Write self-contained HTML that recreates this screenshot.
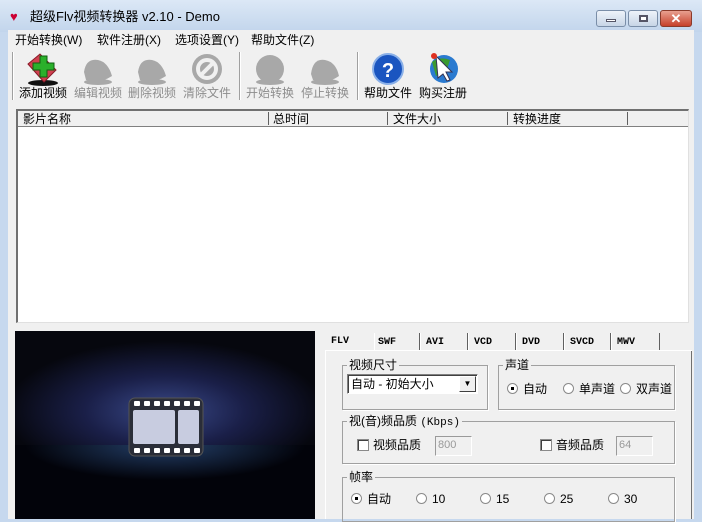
<!DOCTYPE html><html><head><meta charset="utf-8"><style>
*{margin:0;padding:0;box-sizing:border-box}
body{width:702px;height:519px;overflow:hidden;position:relative;background:#c6d8ee;font-family:"Liberation Sans","Noto Sans CJK SC",sans-serif;font-size:12px;color:#000}
.a{position:absolute}
.t{white-space:nowrap;line-height:14px}
.g{color:#8d8d8d}
.m{font-family:"Liberation Mono","Noto Sans CJK SC",monospace;font-size:10px;font-weight:bold}
.fs{border:1px solid #a0a0a0;box-shadow:1px 1px 0 #fff}
.rb{width:11px;height:11px;border-radius:50%;border:1px solid #8a8a8a;background:#fff}
.cb{width:12px;height:12px;border:1px solid #8a8a8a;background:#fff;box-shadow:inset 1px 1px 0 #404040}
.ed{height:20px;border:1px solid #9a9a9a;border-right-color:#fff;border-bottom-color:#fff;background:#f0f0f0;color:#999;font-size:11px;padding:2px 2px}
</style></head><body>
<div class="a" style="left:0;top:0;width:702px;height:32px;background:linear-gradient(#dce8f6,#c2d5ec)"></div>
<div class="a t" style="left:10px;top:10px;font-size:13px;color:#c03"><b>♥</b></div>
<div class="a t" style="left:30px;top:10px;font-size:13px">超级Flv视频转换器 v2.10 - Demo</div>
<div class="a" style="left:596px;top:10px;width:30px;height:17px;border:1px solid #7a8ea8;border-radius:3px;background:linear-gradient(#eef3fa,#c7d5e6)"><div class="a" style="left:9px;top:8px;width:10px;height:3px;background:#fff;border:1px solid #556"></div></div>
<div class="a" style="left:628px;top:10px;width:30px;height:17px;border:1px solid #7a8ea8;border-radius:3px;background:linear-gradient(#eef3fa,#c7d5e6)"><div class="a" style="left:10px;top:4px;width:9px;height:7px;border:2px solid #556;background:#fff"></div></div>
<div class="a" style="left:660px;top:10px;width:32px;height:17px;border:1px solid #8a3a2a;border-radius:3px;background:linear-gradient(#e8a090,#c6402a);color:#fff;font-weight:bold;text-align:center;line-height:15px;font-size:13px">✕</div>
<div class="a" style="left:8px;top:30px;width:686px;height:489px;background:#f0f0f0"></div>
<div class="a t" style="left:15px;top:33px">开始转换(W)</div>
<div class="a t" style="left:97px;top:33px">软件注册(X)</div>
<div class="a t" style="left:175px;top:33px">选项设置(Y)</div>
<div class="a t" style="left:251px;top:33px">帮助文件(Z)</div>
<div class="a" style="left:12px;top:52px;width:1px;height:48px;background:#a0a0a0;box-shadow:1px 0 0 #fff"></div>
<div class="a" style="left:239px;top:52px;width:1px;height:48px;background:#a0a0a0;box-shadow:1px 0 0 #fff"></div>
<div class="a" style="left:357px;top:52px;width:1px;height:48px;background:#a0a0a0;box-shadow:1px 0 0 #fff"></div>
<svg class="a" style="left:0;top:50px" width="470" height="40">
<ellipse cx="43" cy="33" rx="15" ry="3" fill="#111"/>
<path d="M28 14 L40 4 L56 20 L44 32 Z" fill="#d04050" stroke="#8a1a28"/>
<path d="M40 6h7v7h7v7h-7v7h-7v-7h-7v-7h7z" fill="#2bb02b" stroke="#106010"/>
<g fill="#a8a8a8">
<path d="M84 22 Q86 8 98 10 Q108 12 112 26 Q100 34 86 30 Z"/><ellipse cx="98" cy="32" rx="14" ry="3"/>
<path d="M138 22 Q140 8 152 10 Q162 12 166 26 Q154 34 140 30 Z"/><ellipse cx="152" cy="32" rx="14" ry="3"/>
<circle cx="207" cy="19" r="15"/>
<circle cx="270" cy="19" r="14"/><ellipse cx="270" cy="32" rx="14" ry="3"/>
<path d="M311 24 Q313 8 325 10 Q336 12 339 26 Q328 34 313 30 Z"/><ellipse cx="325" cy="32" rx="14" ry="3"/>
</g>
<circle cx="207" cy="19" r="9" fill="none" stroke="#f0f0f0" stroke-width="4"/><path d="M201 25 L213 13" stroke="#f0f0f0" stroke-width="4"/>
<circle cx="388" cy="19" r="15" fill="#1a55c0" stroke="#8ab0e8" stroke-width="2"/>
<text x="388" y="27" fill="#fff" font-size="20" font-weight="bold" text-anchor="middle" font-family="Liberation Sans">?</text>
<circle cx="444" cy="19" r="14" fill="#2a7ad0"/><path d="M432 12 Q440 6 450 10 L446 22 L436 26 Z" fill="#3a9a30"/>
<path d="M436 6 L452 22 L446 22 L450 30 L447 31 L443 24 L438 28 Z" fill="#fff" stroke="#335"/>
<circle cx="434" cy="6" r="3" fill="#e03020"/>
</svg>
<div class="a t" style="left:19px;top:86px">添加视频</div>
<div class="a t g" style="left:74px;top:86px">编辑视频</div>
<div class="a t g" style="left:128px;top:86px">删除视频</div>
<div class="a t g" style="left:183px;top:86px">清除文件</div>
<div class="a t g" style="left:246px;top:86px">开始转换</div>
<div class="a t g" style="left:301px;top:86px">停止转换</div>
<div class="a t" style="left:364px;top:86px">帮助文件</div>
<div class="a t" style="left:419px;top:86px">购买注册</div>
<div class="a" style="left:16px;top:109px;width:673px;height:214px;background:#fff;border:1px solid #a0a0a0;border-right-color:#e0e0e0;border-bottom-color:#e0e0e0;border-left:2px solid #707070;border-top:2px solid #707070"></div>
<div class="a" style="left:18px;top:111px;width:670px;height:16px;background:#f0f0f0;border-bottom:1px solid #808080"></div>
<div class="a t" style="left:23px;top:112px">影片名称</div>
<div class="a" style="left:268px;top:112px;width:1px;height:13px;background:#606060"></div>
<div class="a t" style="left:273px;top:112px">总时间</div>
<div class="a" style="left:387px;top:112px;width:1px;height:13px;background:#606060"></div>
<div class="a t" style="left:393px;top:112px">文件大小</div>
<div class="a" style="left:507px;top:112px;width:1px;height:13px;background:#606060"></div>
<div class="a t" style="left:513px;top:112px">转换进度</div>
<div class="a" style="left:627px;top:112px;width:1px;height:13px;background:#606060"></div>
<div class="a" style="left:15px;top:331px;width:300px;height:188px;background:radial-gradient(ellipse 160px 70px at 150px 80px,#3a4a8a 0%,#1a1f48 50%,#06070e 100%)"></div>
<div class="a" style="left:15px;top:445px;width:300px;height:74px;background:radial-gradient(ellipse 140px 35px at 150px 0,#24406a,#02030a 100%)"></div>
<svg class="a" style="left:128px;top:397px" width="76" height="60">
<rect x="1" y="1" width="74" height="58" rx="6" fill="#2a2d38" stroke="#555"/>
<g fill="#fff"><rect x="6" y="4" width="6" height="5" rx="1"/><rect x="16" y="4" width="6" height="5" rx="1"/><rect x="26" y="4" width="6" height="5" rx="1"/><rect x="36" y="4" width="6" height="5" rx="1"/><rect x="46" y="4" width="6" height="5" rx="1"/><rect x="56" y="4" width="6" height="5" rx="1"/><rect x="66" y="4" width="6" height="5" rx="1"/>
<rect x="6" y="51" width="6" height="5" rx="1"/><rect x="16" y="51" width="6" height="5" rx="1"/><rect x="26" y="51" width="6" height="5" rx="1"/><rect x="36" y="51" width="6" height="5" rx="1"/><rect x="46" y="51" width="6" height="5" rx="1"/><rect x="56" y="51" width="6" height="5" rx="1"/><rect x="66" y="51" width="6" height="5" rx="1"/></g>
<rect x="5" y="13" width="42" height="34" rx="2" fill="#c8cce0"/><rect x="50" y="13" width="21" height="34" rx="2" fill="#c8cce0"/>
</svg>
<div class="a" style="left:325px;top:350px;width:367px;height:169px;border:1px solid #fff;border-right:1px solid #707070;border-bottom:none"></div>
<div class="a t m" style="left:331px;top:335px">FLV</div>
<div class="a" style="left:374px;top:333px;width:46px;height:17px;border-left:1px solid #fff;border-right:1px solid #606060"></div><div class="a t m" style="left:378px;top:336px">SWF</div>
<div class="a" style="left:420px;top:333px;width:48px;height:17px;border-left:1px solid #fff;border-right:1px solid #606060"></div><div class="a t m" style="left:426px;top:336px">AVI</div>
<div class="a" style="left:468px;top:333px;width:48px;height:17px;border-left:1px solid #fff;border-right:1px solid #606060"></div><div class="a t m" style="left:474px;top:336px">VCD</div>
<div class="a" style="left:516px;top:333px;width:48px;height:17px;border-left:1px solid #fff;border-right:1px solid #606060"></div><div class="a t m" style="left:522px;top:336px">DVD</div>
<div class="a" style="left:564px;top:333px;width:47px;height:17px;border-left:1px solid #fff;border-right:1px solid #606060"></div><div class="a t m" style="left:570px;top:336px">SVCD</div>
<div class="a" style="left:611px;top:333px;width:49px;height:17px;border-left:1px solid #fff;border-right:1px solid #606060"></div><div class="a t m" style="left:617px;top:336px">MWV</div>
<div class="a" style="left:374px;top:350px;width:318px;height:1px;background:#fff"></div>
<div class="a fs" style="left:342px;top:365px;width:146px;height:45px"></div><div class="a t" style="left:347px;top:358px;background:#f0f0f0;padding:0 2px">视频尺寸</div>
<div class="a" style="left:347px;top:374px;width:131px;height:20px;background:#fff;border:1px solid #808080;border-right-color:#fff;border-bottom-color:#fff;box-shadow:inset 1px 1px 0 #404040"></div>
<div class="a t" style="left:351px;top:377px">自动 - 初始大小</div>
<div class="a" style="left:459px;top:376px;width:17px;height:16px;background:#f0f0f0;border:1px solid #fff;border-right-color:#404040;border-bottom-color:#404040;font-size:8px;text-align:center;line-height:14px">▼</div>
<div class="a fs" style="left:498px;top:365px;width:177px;height:45px"></div><div class="a t" style="left:503px;top:358px;background:#f0f0f0;padding:0 2px">声道</div>
<div class="a rb" style="left:507px;top:383px"></div><div class="a" style="left:511px;top:387px;width:3px;height:3px;background:#000"></div><div class="a t" style="left:523px;top:382px">自动</div>
<div class="a rb" style="left:563px;top:383px"></div><div class="a t" style="left:579px;top:382px">单声道</div>
<div class="a rb" style="left:620px;top:383px"></div><div class="a t" style="left:636px;top:382px">双声道</div>
<div class="a fs" style="left:342px;top:421px;width:333px;height:43px"></div><div class="a t" style="left:347px;top:414px;background:#f0f0f0;padding:0 2px">视(音)频品质 <span style="font-family:'Liberation Mono';font-size:11px">(Kbps)</span></div>
<div class="a cb" style="left:357px;top:439px"></div><div class="a t" style="left:373px;top:438px">视频品质</div>
<div class="a ed" style="left:435px;top:436px;width:37px">800</div>
<div class="a cb" style="left:540px;top:439px"></div><div class="a t" style="left:556px;top:438px">音频品质</div>
<div class="a ed" style="left:616px;top:436px;width:37px">64</div>
<div class="a fs" style="left:342px;top:477px;width:333px;height:45px"></div><div class="a t" style="left:347px;top:470px;background:#f0f0f0;padding:0 2px">帧率</div>
<div class="a rb" style="left:351px;top:493px"></div><div class="a" style="left:355px;top:497px;width:3px;height:3px;background:#000"></div><div class="a t" style="left:367px;top:492px">自动</div>
<div class="a rb" style="left:416px;top:493px"></div><div class="a t" style="left:432px;top:492px">10</div>
<div class="a rb" style="left:480px;top:493px"></div><div class="a t" style="left:496px;top:492px">15</div>
<div class="a rb" style="left:544px;top:493px"></div><div class="a t" style="left:560px;top:492px">25</div>
<div class="a rb" style="left:608px;top:493px"></div><div class="a t" style="left:624px;top:492px">30</div>
</body></html>
